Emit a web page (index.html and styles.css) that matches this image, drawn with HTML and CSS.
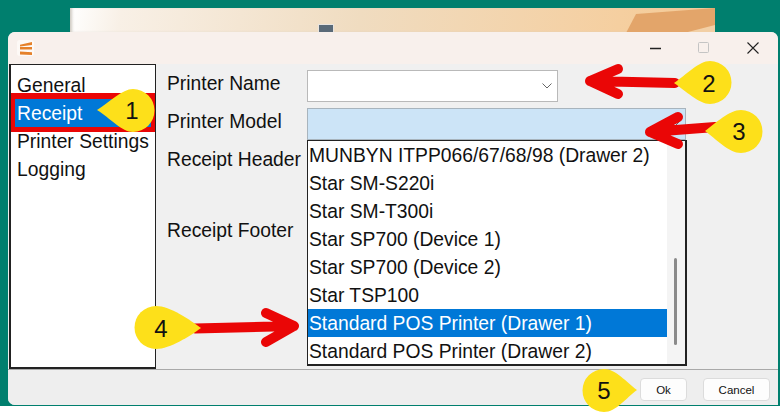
FILE: index.html
```html
<!DOCTYPE html>
<html lang="en">
<head>
<meta charset="utf-8">
<title>Receipt settings</title>
<link rel="stylesheet" href="styles.css">
</head>
<body>
<div class="desktop">
  <div class="back-window">
    <div class="back-shape"></div>
    <div class="back-light"></div>
    <div class="back-thumb"></div>
  </div>
  <div class="window">
    <header class="titlebar">
      <span class="app-icon">
        <svg width="17" height="16" viewBox="0 0 17 16"><path d="M3 4.800L15 2V5L3 6.500Z M3 7H15V9.500H3Z M3 11.500L15 12.300V15L3 14.500Z" fill="#e5812a"/></svg>
      </span>
      <div class="win-controls">
        <svg class="ctl" width="14" height="14" viewBox="0 0 14 14"><path d="M2 7.500H13" stroke="#222" stroke-width="1.300"/></svg>
        <svg class="ctl" width="14" height="14" viewBox="0 0 14 14"><rect x="1.500" y="1.500" width="10" height="10" rx="1" fill="none" stroke="#c4c4c4"/></svg>
        <svg class="ctl" width="14" height="14" viewBox="0 0 14 14"><path d="M1.500 1.500L12.500 12.500M12.500 1.500L1.500 12.500" stroke="#222" stroke-width="1.100"/></svg>
      </div>
    </header>
    <div class="main">
      <nav class="sidebar">
        <div class="nav-item">General</div>
        <div class="nav-item nav-selected"><span class="nav-fill">Receipt</span></div>
        <div class="nav-item">Printer Settings</div>
        <div class="nav-item">Logging</div>
      </nav>
      <form class="form">
        <div class="row row-name">
          <label class="label">Printer Name</label>
          <div class="combo combo-name">
            <svg width="10" height="6" viewBox="0 0 10 6"><path d="M.5.500L5 5 9.500.500" fill="none" stroke="#666"/></svg>
          </div>
        </div>
        <div class="row row-model">
          <label class="label">Printer Model</label>
          <div class="combo combo-model">
            <svg width="10" height="6" viewBox="0 0 10 6"><path d="M.5.500L5 5 9.500.500" fill="none" stroke="#666"/></svg>
          </div>
        </div>
        <div class="row row-header"><label class="label">Receipt Header</label></div>
        <div class="row row-footer"><label class="label">Receipt Footer</label></div>
      </form>
      <div class="dropdown">
        <ul class="options">
          <li>MUNBYN ITPP066/67/68/98 (Drawer 2)</li>
          <li>Star SM-S220i</li>
          <li>Star SM-T300i</li>
          <li>Star SP700 (Device 1)</li>
          <li>Star SP700 (Device 2)</li>
          <li>Star TSP100</li>
          <li class="opt-selected">Standard POS Printer (Drawer 1)</li>
          <li>Standard POS Printer (Drawer 2)</li>
        </ul>
        <div class="scrollbar"><div class="thumb"></div></div>
      </div>
    </div>
    <footer class="footer">
      <button class="btn btn-ok" type="button">Ok</button>
      <button class="btn btn-cancel" type="button">Cancel</button>
    </footer>
  </div>

  <svg class="annotations" width="780" height="413" viewBox="0 0 780 413">
    <g class="arrow">
      <path d="M675 83L590 81M618 69L590 81L618 94"/>
      <path d="M715 127L650 132M678 117L650 132L678 144"/>
      <path d="M195 328.500L294 326M266 313L294 326L266 342"/>
    </g>
    <g class="balloon">
      <path d="M97 110C110 102 122 89 133 89A21.500 21.500 0 0 1 133 132C122 132 110 118 97 110Z"/>
      <path d="M674 83C686 75 699 61 710 61A21.500 21.500 0 0 1 710 104C699 104 686 91 674 83Z"/>
      <path d="M705 131C716 123 729 110 741 110A21.500 21.500 0 0 1 741 153C729 153 716 139 705 131Z"/>
      <path d="M201 328C190 320 170 306 156 306A21.500 21.500 0 0 0 156 349C170 349 190 336 201 328Z"/>
      <path d="M637 390C626 382 616 369 604 369A21.500 21.500 0 0 0 604 412C616 412 626 398 637 390Z"/>
    </g>
    <g class="balloon-text">
      <text x="132" y="119">1</text>
      <text x="709" y="92">2</text>
      <text x="739" y="140">3</text>
      <text x="161" y="337">4</text>
      <text x="604" y="399">5</text>
    </g>
  </svg>
</div>
</body>
</html>
```

FILE: styles.css
```css
* { box-sizing: border-box; }
html, body { margin: 0; padding: 0; }
body { width: 780px; height: 413px; overflow: hidden; background: #fff; font-family: "Liberation Sans", Arial, sans-serif; color: #111; }

.desktop { position: relative; width: 780px; height: 406px; background: #007f6e; }

.back-window {
  position: absolute; left: 70px; top: 8px; width: 645px; height: 25px; overflow: hidden;
  background: linear-gradient(100deg, #fff 0, #f8f0e6 8%, #f0dcc0 45%, #f5cfa0 85%, #f3c995 100%);
  box-shadow: inset 3px 0 3px -1px #cfcac2;
  border-bottom: 1px solid #a89f94;
}
.back-shape {
  position: absolute; left: 556px; top: 0; width: 89px; height: 25px;
  background: #e3a56a; clip-path: polygon(10px 6px, 89px 0, 89px 25px, 0 25px);
}
.back-light {
  position: absolute; left: 614px; top: 17px; width: 31px; height: 8px;
  background: #f2cfa5; clip-path: polygon(0 100%, 100% 0, 100% 100%);
}
.back-thumb {
  position: absolute; left: 249px; top: 17px; width: 14px; height: 8px;
  background: #5a6a78; box-shadow: 0 0 0 1px #e8e4e0;
}

.window {
  position: absolute; left: 8px; top: 32px; width: 770px; height: 373px;
  display: flex; flex-direction: column; overflow: hidden;
  border-radius: 7px 7px 0 7px; background: #f0f0f0;
}

.titlebar { height: 32px; flex: none; background: #f8f0ec; display: flex; align-items: center; justify-content: space-between; padding-left: 9px; }
.app-icon { width: 17px; height: 16px; background: #fdf9f6; border-radius: 3px; display: flex; }
.win-controls { display: flex; gap: 35px; padding-right: 18px; }

.main { position: relative; flex: 1; display: flex; min-height: 0; }

.sidebar { width: 147px; flex: none; margin-left: 1px; background: #fff; border: 1px solid #222; border-width: 1px 1px 2px 2px; padding-top: 6px; }
.nav-item { height: 28px; line-height: 30px; padding-left: 6px; font-size: 19.300px; color: #111; white-space: nowrap; }
.nav-selected { height: 39px; margin: -6px 0 -5px; padding: 6px 0 5px 4px; background: #ea0606; }
.nav-fill { display: block; height: 28px; margin-right: 4px; padding-left: 2px; background: #0078d7; color: #fff; }

.form { flex: 1; padding: 6px 0 0 11px; }
.row { display: flex; align-items: flex-start; }
.row-name { height: 38px; }
.row-model { height: 38px; }
.row-header { height: 71px; }
.label { width: 140px; font-size: 19.300px; line-height: 28px; color: #111; white-space: nowrap; flex: none; }
.combo { height: 32px; display: flex; align-items: center; justify-content: flex-end; padding-right: 5px; border: 1px solid #b9b9b9; }
.combo-name { width: 251px; background: #fff; }
.combo-model { width: 379px; background: #cce4f7; border-color: #a8b4bd; }

.dropdown { position: absolute; left: 299px; top: 76px; width: 380px; height: 226px; background: #fff; border: 1px solid #222; border-width: 1px 2px 2px 1px; display: flex; }
.options { list-style: none; margin: 0; padding: 0; flex: 1; }
.options li { height: 28px; line-height: 30px; padding-left: 1px; font-size: 19.300px; color: #111; white-space: nowrap; }
.options .opt-selected { background: #0078d7; color: #fff; }
.scrollbar { width: 18px; flex: none; background: #f4f4f4; position: relative; }
.thumb { position: absolute; left: 7px; top: 117px; width: 3px; height: 87px; background: #8a8a8a; border-radius: 2px; }

.footer { height: 36px; flex: none; background: #eee; border-top: 1px solid #a9a9a9; display: flex; justify-content: flex-end; align-items: flex-start; gap: 16px; padding: 8px 8px 0 0; }
.btn { height: 23px; font: 11.500px "Liberation Sans", Arial, sans-serif; color: #111; background: #fdfdfd; border: 1px solid #dcdcdc; border-radius: 4px; padding: 0; }
.btn-ok { width: 47px; }
.btn-cancel { width: 67px; }

.annotations { position: absolute; left: 0; top: 0; pointer-events: none; }
.arrow path { fill: none; stroke: #ea0606; stroke-width: 10; stroke-linecap: round; stroke-linejoin: round; }
.balloon path { fill: #fde01a; }
.balloon-text text { font: 24px "Liberation Sans", Arial, sans-serif; text-anchor: middle; fill: #111; }
```
